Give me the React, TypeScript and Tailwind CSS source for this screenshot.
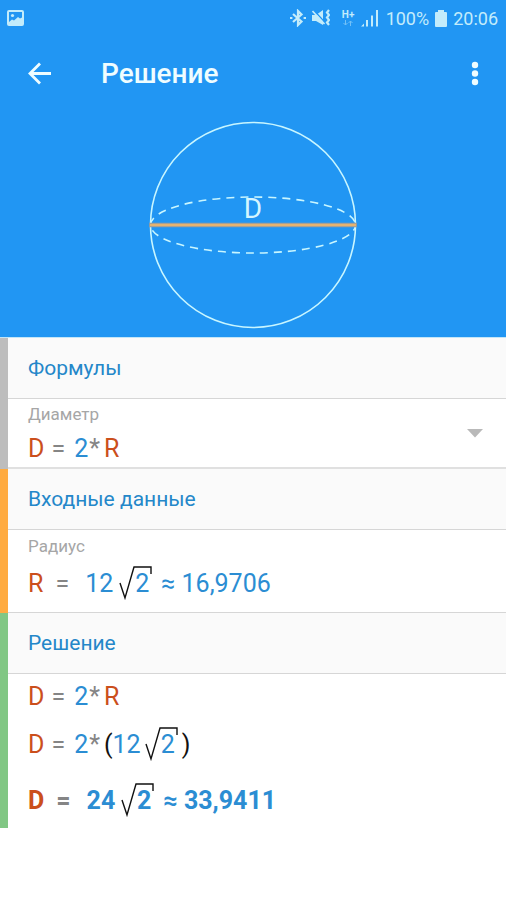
import { useState, type ReactNode } from "react";

function StatusBar() {
  return (
    <div className="flex h-9 items-center justify-between pr-2 pl-[7px] text-[#c3ecfb]">
      <svg width="17" height="16" viewBox="0 0 17 16" aria-label="Снимок экрана">
        <rect x="1" y="1" width="15" height="14" rx="1" fill="none" stroke="currentColor" strokeWidth="2" />
        <circle cx="5.5" cy="5.5" r="1.6" fill="currentColor" />
        <path d="M2 12l3-2.500 2 1L11 7l2 1.500 2-1V14H2z" fill="currentColor" />
      </svg>
      <div className="flex items-center gap-[6px] text-[18px]">
        <svg width="16" height="18" viewBox="0 0 16 18" fill="none" stroke="currentColor" strokeWidth="2.2" aria-label="Bluetooth">
          <path d="M3 5l8.500 7.500L8 16V2l3.500 3.500L3 13" />
          <path d="M0 9h2.4M13.6 9H16" />
        </svg>
        <svg width="18" height="18" viewBox="0 0 18 18" aria-label="Вибрация">
          <path d="M0 6h4l7-5v15l-7-4H0z" fill="currentColor" />
          <path d="M1.500 1l12 13" stroke="#2196f3" strokeWidth="1.4" />
          <path d="M.5 2l12 13" stroke="currentColor" strokeWidth="1.6" />
          <path d="M17 1l-2 2.500 2 2.500-2 2.500 2 2.500-2 2.500 2 2.500" fill="none" stroke="currentColor" strokeWidth="2.2" />
        </svg>
        <div className="ml-[6px] flex w-[13px] flex-col items-center">
          <span className="text-[10px] leading-[10px] font-bold">H+</span>
          <svg width="10" height="6" viewBox="0 0 10 6" fill="none" stroke="currentColor" opacity="0.5" aria-hidden="true">
            <path d="M2.5 0v5M.5 3l2 2 2-2M7.5 6V1M5.5 3l2-2 2 2" />
          </svg>
        </div>
        <svg className="mr-[2px]" width="17" height="17" viewBox="0 0 17 17" fill="currentColor" aria-label="Сигнал сети">
          <path d="M0 16.5l3-3v3zM5 10h2v6.500H5zM10 5.500h2v11h-2zM15 0h2v16.500h-2z" />
        </svg>
        <span>100%</span>
        <svg width="12" height="17" viewBox="0 0 12 17" fill="currentColor" aria-label="Батарея">
          <path d="M3 0h6v2h2a1 1 0 0 1 1 1v13a1 1 0 0 1-1 1H1a1 1 0 0 1-1-1V3a1 1 0 0 1 1-1h2z" />
        </svg>
        <span>20:06</span>
      </div>
    </div>
  );
}

function SphereDiagram() {
  return (
    <svg className="mx-auto block" width="210" height="210" viewBox="0 0 210 210" role="img" aria-label="Диаметр шара">
      <g fill="none" stroke="#c8f6ff" strokeWidth="1.6">
        <circle cx="105" cy="105" r="102.5" />
        <ellipse cx="105" cy="105" rx="102.5" ry="28" strokeDasharray="8 6" strokeDashoffset="2" />
      </g>
      <path d="M1 105h208" stroke="#8f9ba3" strokeWidth="4.5" />
      <path d="M2 105h206" stroke="#e5b370" strokeWidth="2.600" />
      <text x="105" y="98" textAnchor="middle" fontSize="28" fill="#d4f5ff">
        D
      </text>
    </svg>
  );
}

function Section({ title, bar, children }: { title: string; bar: string; children: ReactNode }) {
  return (
    <section className={`border-l-8 ${bar}`}>
      <h2 className="flex h-[61px] items-center border-b border-[#d6d6d6] bg-[#fafafa] pt-px pl-5 text-[21px] text-[#2487c9]">
        {title}
      </h2>
      {children}
    </section>
  );
}

const Var = ({ children }: { children: ReactNode }) => <span className="text-[#cb4f1c]">{children}</span>;
const Num = ({ children }: { children: ReactNode }) => <span className="text-[#2b8dd3]">{children}</span>;
const Op = ({ children }: { children: ReactNode }) => <span className="text-[#858585]">{children}</span>;

function Root({ children }: { children: ReactNode }) {
  return (
    <span className="relative inline-flex h-9 w-[34px] items-center justify-center pl-3">
      <svg className="absolute inset-0" width="34" height="36" viewBox="0 0 34 36" fill="none" stroke="#111" strokeWidth="1.4" aria-hidden="true">
        <path d="M1 17l5 15L15 1h17v7" />
      </svg>
      <Num>{children}</Num>
    </span>
  );
}

function Formula() {
  return (
    <div className="flex items-center text-[25px] leading-[30px]">
      <Var>D</Var>
      <span className="mr-[9px] ml-[7px]">
        <Op>=</Op>
      </span>
      <Num>2</Num>
      <span className="mx-px">
        <Op>*</Op>
      </span>
      <span className="ml-[3px]">
        <Var>R</Var>
      </span>
    </div>
  );
}

export default function App() {
  const [formula, setFormula] = useState("d2r");

  return (
    <div className="min-h-screen bg-white font-['Roboto','Noto_Sans',sans-serif]">
      <header className="bg-[#2196f3] pb-[7px]">
        <StatusBar />
        <div className="flex h-[76px] items-center pr-[19px] pl-[27px] text-[#effdff]">
          <button type="button" aria-label="Назад">
            <svg width="26" height="24" viewBox="0 0 26 24" fill="none" stroke="currentColor" strokeWidth="2.800">
              <path d="M24 11.500H3M13 1.500l-10 10 10 10" />
            </svg>
          </button>
          <h1 className="ml-12 flex-1 text-[28px] font-medium">Решение</h1>
          <button type="button" aria-label="Ещё" className="flex w-6 justify-center">
            <svg width="8" height="26" viewBox="0 0 8 26" fill="currentColor">
              <circle cx="4" cy="4" r="3.200" />
              <circle cx="4" cy="12.500" r="3.200" />
              <circle cx="4" cy="21" r="3.200" />
            </svg>
          </button>
        </div>
        <div className="mt-2">
          <SphereDiagram />
        </div>
      </header>

      <main className="border-t border-[#c3e6f8]">
        <Section title="Формулы" bar="border-l-[#bdbdbd]">
          <div className="relative flex h-[70px] items-center justify-between border-b-2 border-[#e0e0e0] pr-[23px] pl-5">
            <div>
              <label htmlFor="formula" className="block text-[17px] leading-6 text-[#a6a6a6]">
                Диаметр
              </label>
              <div className="mt-2">
                <Formula />
              </div>
            </div>
            <svg width="16" height="9" viewBox="0 0 16 9" fill="#b9b9b9" aria-hidden="true">
              <path d="M0 0h16L8 8.500z" />
            </svg>
            <select
              id="formula"
              value={formula}
              onChange={(e) => setFormula(e.target.value)}
              className="absolute inset-0 w-full cursor-pointer opacity-0"
            >
              <option value="d2r">D = 2*R</option>
            </select>
          </div>
        </Section>

        <Section title="Входные данные" bar="border-l-[#ffab40]">
          <div className="h-[83px] border-b border-[#d6d6d6] pt-1 pl-5">
            <p className="text-[17px] leading-6 text-[#a6a6a6]">Радиус</p>
            <div className="mt-2 flex items-center text-[25px] leading-9">
              <Var>R</Var>
              <span className="mr-4 ml-3">
                <Op>=</Op>
              </span>
              <Num>12</Num>
              <span className="mr-2 ml-[6px]">
                <Root>2</Root>
              </span>
              <Num>≈ 16,9706</Num>
            </div>
          </div>
        </Section>

        <Section title="Решение" bar="border-l-[#81c784]">
          <div className="pt-2 pb-[9px] pl-5">
            <Formula />
            <div className="mt-[15px] flex items-center text-[25px] leading-9">
              <Var>D</Var>
              <span className="mr-[9px] ml-[7px]">
                <Op>=</Op>
              </span>
              <Num>2</Num>
              <span className="mx-px">
                <Op>*</Op>
              </span>
              <span className="ml-[3px] text-[#111]">(</span>
              <Num>12</Num>
              <span className="mr-[3px] ml-1">
                <Root>2</Root>
              </span>
              <span className="text-[#111]">)</span>
            </div>
            <div className="mt-5 flex items-center text-[25px] leading-9 font-bold">
              <Var>D</Var>
              <span className="mr-4 ml-3">
                <Op>=</Op>
              </span>
              <Num>24</Num>
              <span className="mr-2 ml-[6px]">
                <Root>2</Root>
              </span>
              <Num>≈ 33,9411</Num>
            </div>
          </div>
        </Section>
      </main>
    </div>
  );
}
